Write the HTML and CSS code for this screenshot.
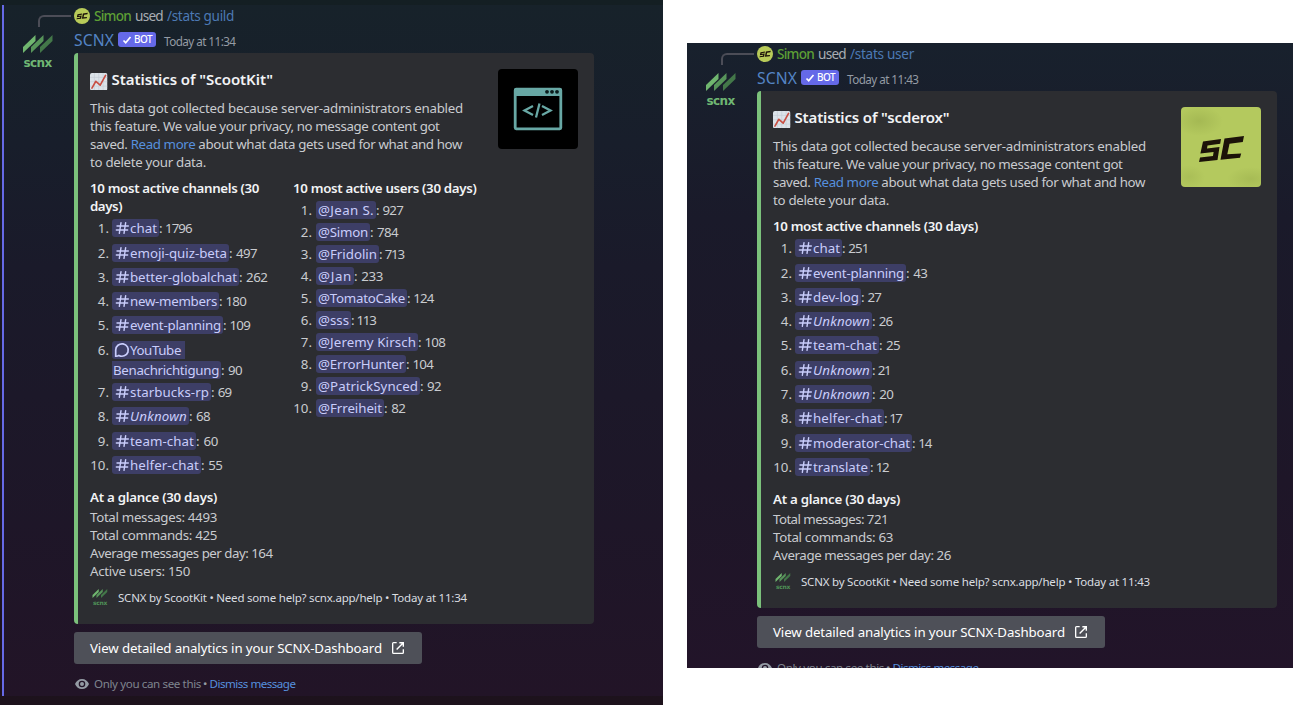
FILE: index.html
```
<!DOCTYPE html>
<html lang="en">
<head>
<meta charset="utf-8">
<title>Server statistics</title>
<link rel="stylesheet" href="styles.css">
</head>
<body>
<svg class="defs" aria-hidden="true">
  <symbol id="scnx" viewBox="0 0 30 18">
    <path fill="#70b66f" d="M0 18v-6L12.500 0v6z"/>
    <path fill="#57945a" d="M8 18v-6L20.500 0v6z"/>
    <path fill="#437749" d="M17 18v-6L29.500 0v6z"/>
  </symbol>
  <symbol id="sc" viewBox="0 0 80 80">
    <path fill="#1c1209" d="M22 34.500 40 32l-.8 4.800-12.700 1.700-.5 3 12.500-1.500-2 13-18.500 2 1-4.500 13-1.500.6-4-13.200 1.500zM43.500 31.500 63 29l-1.200 6-13.300 1.700-2.200 10.600 13.900-.9-1.200 4.400-19.500 2z"/>
  </symbol>
  <symbol id="hash" viewBox="0 0 24 24">
    <path fill="none" stroke="currentColor" stroke-width="2.100" stroke-linecap="round" d="M10.500 4 8 20M17.500 4 15 20M4.500 9h17M3.500 15h17"/>
  </symbol>
  <symbol id="spool" viewBox="0 0 16 16">
    <path fill="none" stroke="currentColor" stroke-width="1.700" d="M1.700 14.200V8a6.300 6.200 0 1 1 3.200 5.400q-1.500 1-3.200.8z"/>
  </symbol>
  <symbol id="chart" viewBox="0 0 18 18">
    <rect width="18" height="18" rx="2" fill="#dce3e9"/>
    <path stroke="#c3ccd5" stroke-width=".6" d="M4.500 0v18M9 0v18M13.500 0v18M0 4.500h18M0 9h18M0 13.500h18"/>
    <path fill="none" stroke="#c94f43" stroke-width="1.700" stroke-linejoin="round" stroke-linecap="round" d="m2 15.500 4-7 4.500 4L16 2.500"/>
  </symbol>
  <symbol id="check" viewBox="0 0 10 10">
    <path fill="none" stroke="#fff" stroke-width="1.700" d="m1.500 5.500 2.200 2.300L8.500 2"/>
  </symbol>
  <symbol id="launch" viewBox="0 0 24 24">
    <path fill="#fff" d="M10 5V3H5.400A2.400 2.400 0 0 0 3 5.400v13.200A2.400 2.400 0 0 0 5.400 21h13.200a2.400 2.400 0 0 0 2.400-2.400V14h-2v5H5V5zM14 3v2.200h3.400l-8.200 8.200 1.500 1.500 8.200-8.200V10H21V3z"/>
  </symbol>
  <symbol id="eye" viewBox="0 0 14 10">
    <path fill="#949ba4" fill-rule="evenodd" d="M7 0C3.800 0 1.200 2 0 5c1.200 3 3.800 5 7 5s5.800-2 7-5C12.800 2 10.200 0 7 0zm0 8.300a3.300 3.300 0 1 1 0-6.600 3.300 3.300 0 0 1 0 6.600zM7 3a2 2 0 1 0 0 4 2 2 0 0 0 0-4z"/>
  </symbol>
</svg>

<main class="page">
  <section class="panel guild">
    <div class="message">
      <div class="side">
        <div class="spine"></div>
        <svg class="logo"><use href="#scnx"/></svg>
        <div class="logo-name"><span data-w="28">scnx</span></div>
      </div>
      <div class="main">
        <div class="reply"><svg class="mini"><circle cx="8" cy="8" r="8" fill="#b8cb59"/><use href="#sc" width="20" height="20" x="-2" y="-2.500"/></svg><span class="who" data-w="37">Simon</span><span class="used" data-w="28">used</span><span class="cmd" data-w="67">/stats guild</span></div>
        <div class="head"><span class="bot" data-w="40">SCNX</span><span class="tag"><svg><use href="#check"/></svg><span data-w="18">BOT</span></span><span class="time" data-w="71.500">Today at 11:34</span></div>
        <article class="embed">
          <div class="top">
            <div class="intro">
              <h2><svg><use href="#chart"/></svg><span data-w="161.500">Statistics of "ScootKit"</span></h2>
              <p><span data-w="373">This data got collected because server-administrators enabled</span><br><span data-w="349.500">this feature. We value your privacy, no message content got</span><br><span data-w="372"><span>saved. </span><a>Read more</a> about what data gets used for what and how</span><br><span data-w="116">to delete your data.</span></p>
            </div>
            <svg class="thumb" viewBox="0 0 80 80"><rect width="80" height="80" fill="#000"/><rect x="17.200" y="20.200" width="45.600" height="39.600" rx="1" fill="none" stroke="#68a8a5" stroke-width="2.800"/><path fill="#68a8a5" d="M16 20h48v7H16z"/><g fill="#0b1c1c"><circle cx="49" cy="22.800" r="1.900"/><circle cx="54" cy="22.800" r="1.900"/><circle cx="59" cy="22.800" r="1.900"/></g><path fill="none" stroke="#68a8a5" stroke-width="2.300" d="m35 37-8.500 4.500L35 46M44 37l8.500 4.500L44 46M41.500 34.500l-3.500 14"/></svg>
          </div>
          <div class="fields">
            <div class="field first">
              <h3><span data-w="169">10 most active channels (30</span><br><span data-w="32">days)</span></h3>
              <ol class="channels">
                <li><i>1.</i><b><svg><use href="#hash"/></svg><span data-w="27">chat</span></b><span data-w="32.500">: 1796</span></li>
                <li><i>2.</i><b><svg><use href="#hash"/></svg><span data-w="97">emoji-quiz-beta</span></b><span data-w="28">: 497</span></li>
                <li><i>3.</i><b><svg><use href="#hash"/></svg><span data-w="107">better-globalchat</span></b><span data-w="28.500">: 262</span></li>
                <li><i>4.</i><b><svg><use href="#hash"/></svg><span data-w="87">new-members</span></b><span data-w="27">: 180</span></li>
                <li><i>5.</i><b><svg><use href="#hash"/></svg><span data-w="91">event-planning</span></b><span data-w="27">: 109</span></li>
                <li class="tall"><i>6.</i><div><div class="part one"><b><svg><use href="#spool"/></svg><span data-w="51">YouTube</span></b></div><div class="part two"><b><span data-w="106">Benachrichtigung</span></b><span data-w="21">: 90</span></div></div></li>
                <li><i>7.</i><b><svg><use href="#hash"/></svg><span data-w="79">starbucks-rp</span></b><span data-w="20.500">: 69</span></li>
                <li><i>8.</i><b><svg><use href="#hash"/></svg><em data-w="57">Unknown</em></b><span data-w="21">: 68</span></li>
                <li><i>9.</i><b><svg><use href="#hash"/></svg><span data-w="64">team-chat</span></b><span data-w="22">: 60</span></li>
                <li><i>10.</i><b><svg><use href="#hash"/></svg><span data-w="69">helfer-chat</span></b><span data-w="21.500">: 55</span></li>
              </ol>
            </div>
            <div class="field">
              <h3><span data-w="183.500">10 most active users (30 days)</span></h3>
              <ol class="users">
                <li><i>1.</i><b><span data-w="56">@Jean S.</span></b><span data-w="27">: 927</span></li>
                <li><i>2.</i><b><span data-w="50">@Simon</span></b><span data-w="28">: 784</span></li>
                <li><i>3.</i><b><span data-w="59">@Fridolin</span></b><span data-w="25">: 713</span></li>
                <li><i>4.</i><b><span data-w="34">@Jan</span></b><span data-w="29">: 233</span></li>
                <li><i>5.</i><b><span data-w="87">@TomatoCake</span></b><span data-w="26.500">: 124</span></li>
                <li><i>6.</i><b><span data-w="31">@sss</span></b><span data-w="24.500">: 113</span></li>
                <li><i>7.</i><b><span data-w="98">@Jeremy Kirsch</span></b><span data-w="27">: 108</span></li>
                <li><i>8.</i><b><span data-w="86">@ErrorHunter</span></b><span data-w="27">: 104</span></li>
                <li><i>9.</i><b><span data-w="100">@PatrickSynced</span></b><span data-w="21">: 92</span></li>
                <li><i>10.</i><b><span data-w="64">@Frreiheit</span></b><span data-w="21.500">: 82</span></li>
              </ol>
            </div>
          </div>
          <div class="glance">
            <h3><span data-w="127">At a glance (30 days)</span></h3>
            <p><span data-w="127">Total messages: 4493</span><br><span data-w="127">Total commands: 425</span><br><span data-w="182.500">Average messages per day: 164</span><br><span data-w="100">Active users: 150</span></p>
          </div>
          <footer><div class="stamp"><svg><use href="#scnx"/></svg><small>scnx</small></div><span data-w="349">SCNX by ScootKit • Need some help? scnx.app/help • Today at 11:34</span></footer>
        </article>
        <button class="link"><span data-w="292">View detailed analytics in your SCNX-Dashboard</span><svg><use href="#launch"/></svg></button>
        <div class="private"><svg><use href="#eye"/></svg><span data-w="107">Only you can see this</span><span class="dot">•</span><a data-w="86">Dismiss message</a></div>
      </div>
    </div>
  </section>

  <section class="panel user">
    <div class="message">
      <div class="side">
        <div class="spine"></div>
        <svg class="logo"><use href="#scnx"/></svg>
        <div class="logo-name"><span data-w="28">scnx</span></div>
      </div>
      <div class="main">
        <div class="reply"><svg class="mini"><circle cx="8" cy="8" r="8" fill="#b8cb59"/><use href="#sc" width="20" height="20" x="-2" y="-2.500"/></svg><span class="who" data-w="37">Simon</span><span class="used" data-w="28">used</span><span class="cmd" data-w="64">/stats user</span></div>
        <div class="head"><span class="bot" data-w="40">SCNX</span><span class="tag"><svg><use href="#check"/></svg><span data-w="18">BOT</span></span><span class="time" data-w="71.500">Today at 11:43</span></div>
        <article class="embed">
          <div class="top">
            <div class="intro">
              <h2><svg><use href="#chart"/></svg><span data-w="155">Statistics of "scderox"</span></h2>
              <p><span data-w="373">This data got collected because server-administrators enabled</span><br><span data-w="349.500">this feature. We value your privacy, no message content got</span><br><span data-w="372"><span>saved. </span><a>Read more</a> about what data gets used for what and how</span><br><span data-w="116">to delete your data.</span></p>
            </div>
            <svg class="thumb" viewBox="0 0 80 80"><defs><radialGradient id="lime"><stop offset="0" stop-color="#9aae4c"/><stop offset="1" stop-color="#9aae4c" stop-opacity="0"/></radialGradient></defs><rect width="80" height="80" fill="#b4c95e"/><ellipse cx="18" cy="14" rx="24" ry="15" fill="url(#lime)" opacity=".6"/><ellipse cx="70" cy="72" rx="24" ry="12" fill="url(#lime)" opacity=".5"/><ellipse cx="8" cy="70" rx="16" ry="12" fill="url(#lime)" opacity=".4"/><use href="#sc" width="80" height="80"/></svg>
          </div>
          <div class="fields">
            <div class="field">
              <h3><span data-w="205">10 most active channels (30 days)</span></h3>
              <ol class="channels">
                <li><i>1.</i><b><svg><use href="#hash"/></svg><span data-w="27">chat</span></b><span data-w="26.500">: 251</span></li>
                <li><i>2.</i><b><svg><use href="#hash"/></svg><span data-w="91">event-planning</span></b><span data-w="21.500">: 43</span></li>
                <li><i>3.</i><b><svg><use href="#hash"/></svg><span data-w="46">dev-log</span></b><span data-w="20">: 27</span></li>
                <li><i>4.</i><b><svg><use href="#hash"/></svg><em data-w="57">Unknown</em></b><span data-w="20.500">: 26</span></li>
                <li><i>5.</i><b><svg><use href="#hash"/></svg><span data-w="64">team-chat</span></b><span data-w="21">: 25</span></li>
                <li><i>6.</i><b><svg><use href="#hash"/></svg><em data-w="57">Unknown</em></b><span data-w="18.500">: 21</span></li>
                <li><i>7.</i><b><svg><use href="#hash"/></svg><em data-w="57">Unknown</em></b><span data-w="21.500">: 20</span></li>
                <li><i>8.</i><b><svg><use href="#hash"/></svg><span data-w="69">helfer-chat</span></b><span data-w="17.500">: 17</span></li>
                <li><i>9.</i><b><svg><use href="#hash"/></svg><span data-w="97">moderator-chat</span></b><span data-w="19.500">: 14</span></li>
                <li><i>10.</i><b><svg><use href="#hash"/></svg><span data-w="55">translate</span></b><span data-w="18.500">: 12</span></li>
              </ol>
            </div>
          </div>
          <div class="glance">
            <h3><span data-w="127">At a glance (30 days)</span></h3>
            <p><span data-w="115">Total messages: 721</span><br><span data-w="120">Total commands: 63</span><br><span data-w="178">Average messages per day: 26</span></p>
          </div>
          <footer><div class="stamp"><svg><use href="#scnx"/></svg><small>scnx</small></div><span data-w="349">SCNX by ScootKit • Need some help? scnx.app/help • Today at 11:43</span></footer>
        </article>
        <button class="link"><span data-w="292">View detailed analytics in your SCNX-Dashboard</span><svg><use href="#launch"/></svg></button>
        <div class="private"><svg><use href="#eye"/></svg><span data-w="107">Only you can see this</span><span class="dot">•</span><a data-w="86">Dismiss message</a></div>
      </div>
    </div>
  </section>
</main>
<script src="fit.js"></script>
</body>
</html>
```
FILE: styles.css
```
* { box-sizing: border-box; }
body { margin: 0; background: #fff; font: 400 13.3px/18px "Noto Sans", sans-serif; color: #c9cbcf; overflow: hidden; }
h2, h3, p, ol { margin: 0; padding: 0; }
svg { display: block; flex: none; }
a { color: #5690de; }
[data-w] { white-space: nowrap; }
.defs { position: absolute; width: 0; height: 0; }

.page { display: flex; align-items: flex-start; gap: 24px; height: 705px; }
.panel { overflow: hidden; flex: none; }
.guild { width: 663px; height: 705px; padding: 5px 0 10px 2px; background: linear-gradient(#141f23, #171923 30%, #1d121c); }
.user { width: 606px; height: 625px; margin-top: 43px; background: linear-gradient(#18212d, #1a1a2a 28%, #1e1628 70%, #221429); }
.message { display: flex; }
.guild .message { height: 691px; border-left: 2px solid #6669e6; background: linear-gradient(#17222a, #181e2b 20%, #1a1a2a 38%, #1e1628 75%, #221427); }
.side { width: 70px; flex: none; display: flex; flex-direction: column; align-items: center; padding: 10px 3px 0 0; }
.spine { width: 33px; height: 12px; margin-left: 33px; border: 2px solid #4c4d57; border-width: 2px 0 0 2px; border-top-left-radius: 6px; }
.logo { width: 30px; height: 18px; margin: 8px 0 0 1px; }
.logo-name { font: 700 12px/14px "DejaVu Sans", sans-serif; color: #6fb673; margin-top: 3px; }
.main { width: 520px; flex: none; padding-top: 3px; }

.reply { display: flex; align-items: center; height: 16px; font-size: 13.600px; gap: 4px; color: #a9adb3; }
.mini { width: 16px; height: 16px; }
.who { color: #5d9f35; font-weight: 500; }
.cmd { color: #4c79b4; }
.head { display: flex; align-items: center; height: 22px; margin: 5px 0 2px; }
.bot { font-size: 15.700px; color: #5484c4; }
.tag { display: flex; align-items: center; gap: 2px; width: 38px; height: 15px; margin: -1px 0 0 4px; padding-left: 4px; border-radius: 3px; background: #6569e8; color: #fff; font: 500 10px/15px "Noto Sans", sans-serif; }
.tag svg { width: 10px; height: 10px; }
.time { margin-left: 8px; padding-top: 1px; font-size: 11.700px; color: #949ba4; }

.embed { border-left: 4px solid #7bc17b; border-radius: 4px; background: #2c2d31; padding: 16px 16px 16px 12px; }
.top { display: flex; justify-content: space-between; height: 102px; }
h2 { display: flex; align-items: center; gap: 4px; height: 20px; font-size: 15px; font-weight: 600; color: #f2f3f5; margin-bottom: 10px; }
h2 svg { width: 17.500px; height: 17.500px; margin-top: 5px; }
.thumb { width: 80px; height: 80px; border-radius: 4px; }
.fields { display: flex; margin-top: 8px; }
.first { width: 203px; }
h3 { font-size: 13.300px; line-height: 18px; font-weight: 600; color: #f2f3f5; }
ol { list-style: none; }
.channels { margin-top: 1.300px; }
.users { margin-top: 2px; }
li { display: flex; align-items: center; height: 24.280px; }
.users li { height: 22px; }
li > span, .part > span { word-spacing: 1px; }
li i { width: 27px; margin-left: -8px; margin-right: 3px; text-align: right; font-style: normal; }
.users i { margin-right: 4px; }
li b { display: flex; align-items: center; height: 18px; padding: 0 2px; border-radius: 3px; background: #3d3e66; color: #c9cdfb; font-weight: 400; }
li b svg { width: 16px; height: 16px; }
.tall { align-items: flex-start; height: 42.300px; }
.tall > i { margin-top: 3px; }
.part { display: flex; align-items: center; height: 20.150px; }
.part.one { padding-top: 2px; height: 22.150px; }
.one b { padding-right: 4px; border-radius: 3px 0 0 3px; }
.two b { padding: 0 2px 0 1px; border-radius: 0 3px 3px 0; }
.glance { margin-top: 11px; }
.glance p { margin-top: 2px; }
footer { display: flex; align-items: center; gap: 8px; height: 20px; margin-top: 8px; font-size: 11.500px; font-weight: 400; color: #dbdee1; white-space: nowrap; }
.stamp { width: 20px; height: 20px; display: flex; flex-direction: column; align-items: center; justify-content: center; }
.stamp svg { width: 16px; height: 9px; }
.stamp small { font: 700 6px/7px "DejaVu Sans", sans-serif; color: #4f9157; margin-top: 1px; letter-spacing: -.3px; }
.link { display: flex; align-items: center; gap: 8px; width: 348px; height: 32px; margin-top: 8px; padding: 0 16px; border: 0; border-radius: 3px; background: #4e5058; color: #fff; font: 400 13.300px/18px "Noto Sans", sans-serif; }
.link svg { width: 16px; height: 16px; }
.private { display: flex; align-items: center; height: 18px; margin-top: 11px; font-size: 11.600px; color: #7f848e; }
.private svg { width: 14px; height: 10px; margin: 0 5px 0 1px; }
.dot { width: 8.500px; text-align: center; color: #949ba4; }
```
FILE: fit.js
```
// Tracks each run of text so that it fills the width given in data-w.
document.querySelectorAll('[data-w]').forEach(function (el) {
  var range = document.createRange();
  range.selectNodeContents(el);
  var natural = range.getBoundingClientRect().width;
  var count = el.textContent.length;
  el.style.letterSpacing = ((parseFloat(el.dataset.w) - natural) / count).toFixed(4) + 'px';
});
```
